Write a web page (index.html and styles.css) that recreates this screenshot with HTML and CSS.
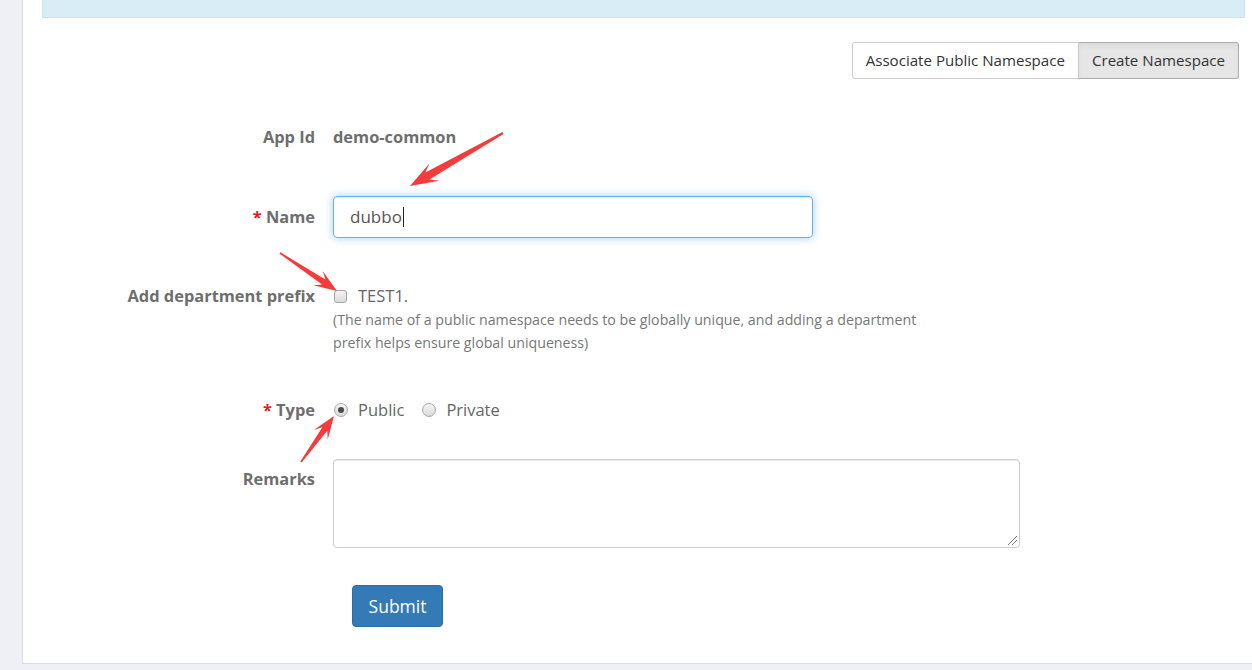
FILE: index.html
```html
<!DOCTYPE html>
<html>
<head>
<meta charset="utf-8">
<link rel="stylesheet" href="styles.css">
</head>
<body>
<div class="page">
  <div class="side"></div>
  <div class="panel">
    <div class="alert"></div>
    <div class="btn-row">
      <div class="btn-group">
        <span class="btn">Associate Public Namespace</span>
        <span class="btn active">Create Namespace</span>
      </div>
    </div>
    <div class="form">
      <div class="row r-appid">
        <div class="label">App Id</div>
        <div class="control value">demo-common</div>
      </div>
      <div class="row r-name">
        <div class="label"><span class="req">*</span> Name</div>
        <div class="control"><div class="input">dubbo<span class="caret"></span></div></div>
      </div>
      <div class="row r-prefix">
        <div class="label">Add department prefix</div>
        <div class="control">
          <div class="check-line"><span class="checkbox"></span><span class="opt">TEST1.</span></div>
          <div class="help">(The name of a public namespace needs to be globally unique, and adding a department prefix helps ensure global uniqueness)</div>
        </div>
      </div>
      <div class="row r-type">
        <div class="label"><span class="req">*</span> Type</div>
        <div class="control radios">
          <span class="radio checked"></span><span class="opt">Public</span>
          <span class="radio"></span><span class="opt">Private</span>
        </div>
      </div>
      <div class="row r-remarks">
        <div class="label">Remarks</div>
        <div class="control"><div class="textarea"><span class="grip"></span></div></div>
      </div>
      <div class="row r-submit">
        <div class="label"></div>
        <div class="control"><span class="submit">Submit</span></div>
      </div>
    </div>
  </div>
</div>
<svg class="arrows" width="1252" height="670" viewBox="0 0 1252 670">
  <polygon fill="#f53b3b" points="503.5,133.9 429.4,179.6 439.3,180.8 410,186 429.4,163.4 425.4,172.6 502.5,132.1"/>
  <polygon fill="#f53b3b" points="279.55,253.66 322.05,284.56 313.17,285.23 337,291 322.65,271.11 325.39,279.58 280.45,252.34"/>
  <polygon fill="#f53b3b" points="301.65,462.46 327.23,430.82 327.7,439.71 334,416 313.8,429.9 322.33,427.36 300.35,461.54"/>
</svg>
</body>
</html>
```
FILE: styles.css
```css
html, body {
  margin: 0;
  padding: 0;
}
body {
  background: #eff0f5;
  font-family: "Open Sans", "Noto Sans", sans-serif;
  color: #555;
  width: 1252px;
  height: 670px;
  overflow: hidden;
  position: relative;
}
.page {
  display: flex;
  height: 664px;
}
.side {
  width: 22px;
  flex: none;
}
.panel {
  flex: 1;
  background: #fff;
  border-left: 1px solid #dcdde2;
  border-bottom: 1px solid #dcdde2;
  padding: 0 7px 0 19px;
  box-sizing: border-box;
}
.alert {
  height: 17px;
  background: #d9edf7;
  border: 1px solid #bce8f1;
  border-top: none;
}
.btn-row {
  display: flex;
  justify-content: flex-end;
  margin-top: 24px;
  padding-right: 6px;
}
.btn-group {
  display: flex;
}
.btn {
  display: block;
  height: 37px;
  line-height: 35px;
  box-sizing: border-box;
  border: 1px solid #ccc;
  padding: 0 13px;
  font-size: 15.1px;
  color: #333;
  background: #fff;
}
.btn:first-child {
  border-radius: 3px 0 0 3px;
}
.btn.active {
  background: #e6e6e6;
  border-color: #adadad;
  border-left: none;
  border-radius: 0 3px 3px 0;
  box-shadow: inset 0 3px 5px rgba(0,0,0,0.05);
}
.form {
  display: flex;
  flex-direction: column;
}
.row {
  display: flex;
  column-gap: 18px;
}
.label {
  width: 273px;
  flex: none;
  text-align: right;
  font-size: 16.4px;
  font-weight: 700;
  color: #6e6e6e;
  line-height: 22px;
}
.req {
  color: #e02020;
}
.control {
  flex: 1;
  font-size: 15px;
  line-height: 22px;
  color: #666;
}
.value {
  font-size: 16.4px;
  font-weight: 700;
  color: #6e6e6e;
}
.r-appid {
  margin-top: 47px;
}
.r-name {
  margin-top: 48px;
  align-items: center;
}
.input {
  width: 480px;
  height: 42px;
  box-sizing: border-box;
  border: 1px solid #66afe9;
  border-radius: 4px;
  box-shadow: inset 0 1px 1px rgba(0,0,0,0.075), 0 0 8px rgba(102,175,233,0.6);
  padding: 0 16px;
  font-size: 17px;
  line-height: 40px;
  color: #555;
  display: flex;
  align-items: center;
}
.caret {
  display: inline-block;
  width: 1px;
  height: 20px;
  background: #222;
  margin-left: 1px;
}
.r-prefix {
  margin-top: 47px;
}
.check-line, .radios {
  display: flex;
  align-items: center;
}
.checkbox {
  width: 13px;
  height: 13px;
  box-sizing: border-box;
  border: 1px solid #a5a5a5;
  border-radius: 3px;
  background: linear-gradient(#f3f3f3, #dcdcdc);
  margin-left: 1px;
  margin-right: 11px;
}
.opt {
  font-size: 16.5px;
  color: #666;
}
.help {
  margin-top: 1px;
  width: 600px;
  font-size: 14.2px;
  line-height: 23px;
  color: #777;
}
.r-type {
  margin-top: 45px;
}
.radio {
  width: 14px;
  height: 14px;
  box-sizing: border-box;
  border: 1px solid #a8a8a8;
  border-radius: 50%;
  background: linear-gradient(#f5f5f5, #dadada);
  margin-left: 1px;
  margin-right: 10px;
  position: relative;
}
.radio.checked::after {
  content: "";
  position: absolute;
  left: 3px;
  top: 3px;
  width: 6px;
  height: 6px;
  border-radius: 50%;
  background: #4a4a4a;
}
.radios .opt:nth-of-type(2) {
  margin-right: 17px;
}
.r-remarks {
  margin-top: 38px;
}
.r-remarks .label {
  padding-top: 9px;
}
.textarea {
  width: 687px;
  height: 89px;
  box-sizing: border-box;
  border: 1px solid #ccc;
  border-radius: 4px;
  box-shadow: inset 0 1px 1px rgba(0,0,0,0.075);
  position: relative;
}
.grip {
  position: absolute;
  right: 2px;
  bottom: 2px;
  width: 9px;
  height: 9px;
  background: linear-gradient(135deg, transparent 45%, #777 45%, #777 52%, transparent 52%, transparent 70%, #777 70%, #777 77%, transparent 77%);
}
.r-submit {
  margin-top: 37px;
}
.submit {
  display: inline-block;
  margin-left: 19px;
  width: 91px;
  height: 42px;
  box-sizing: border-box;
  background: #337ab7;
  border: 1px solid #2e6da4;
  border-radius: 4px;
  color: #fff;
  font-size: 17.5px;
  line-height: 40px;
  text-align: center;
}
.arrows {
  position: absolute;
  left: 0;
  top: 0;
  pointer-events: none;
}
```
